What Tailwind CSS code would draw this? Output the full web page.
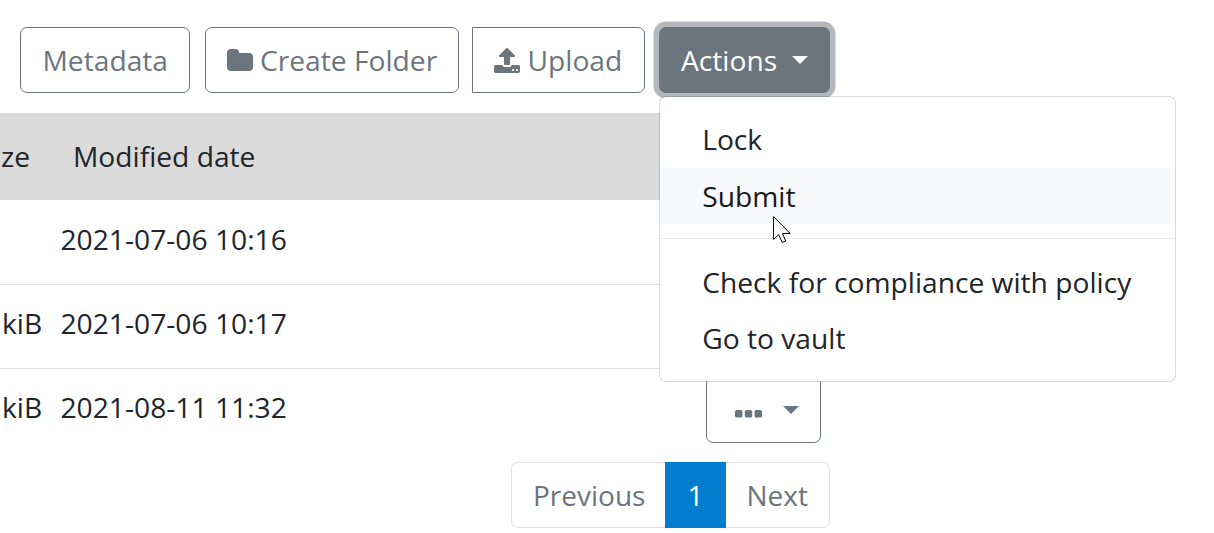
<!DOCTYPE html>
<html lang="en">
<head>
<meta charset="utf-8">
<title>Research files</title>
<script src="https://cdn.jsdelivr.net/npm/@tailwindcss/browser@4"></script>
</head>
<body class="bg-white">
<div class="relative h-[533px] w-[1214px] overflow-hidden bg-white font-['Open_Sans','Noto_Sans',sans-serif] text-[28.2px] leading-[42px] text-[#212529]">
  <div class="w-[830px]">
    <div class="flex h-[113px] pt-[27px] text-[#6c757d]">
      <button class="ml-5 flex h-[66px] w-[170px] items-center rounded-[7px] border border-[#6c757d] pl-[21.5px]"><span>Metadata</span></button>
      <button class="ml-[15px] flex h-[66px] w-[254px] items-center rounded-[7px] border border-[#6c757d] pl-[20px]">
        <svg class="mr-[6px] size-7 shrink-0 translate-y-px" viewBox="0 0 1792 1792" fill="currentColor"><path d="M1728 608v704q0 92-66 158t-158 66H288q-92 0-158-66t-66-158V352q0-92 66-158t158-66h320q92 0 158 66t66 158v32h672q92 0 158 66t66 158z"/></svg>
        <span class="whitespace-nowrap">Create Folder</span>
      </button>
      <button class="ml-[13px] flex h-[66px] w-[173px] items-center rounded-r-[7px] border border-[#6c757d] pl-[20px]">
        <svg class="mr-[6.5px] size-7 shrink-0 translate-y-px" viewBox="0 0 1792 1792" fill="currentColor"><path d="M1344 1472q0-26-19-45t-45-19-45 19-19 45 19 45 45 19 45-19 19-45zm256 0q0-26-19-45t-45-19-45 19-19 45 19 45 45 19 45-19 19-45zm128-224v320q0 40-28 68t-68 28H160q-40 0-68-28t-28-68v-320q0-40 28-68t68-28h427q21 56 70.5 92t110.5 36h256q61 0 110.5-36t70.5-92h427q40 0 68 28t28 68zm-325-648q-17 40-59 40h-256v448q0 26-19 45t-45 19H768q-26 0-45-19t-19-45V640H448q-42 0-59-40-17-39 14-69l448-448q18-19 45-19t45 19l448 448q31 30 14 69z"/></svg>
        <span>Upload</span>
      </button>
      <button class="ml-[14px] flex h-[66px] w-[171px] items-center rounded-[7px] bg-[#6c757d] pl-[22px] text-white ring-[5.5px] ring-[#b2b9be]">
        <span class="w-[96px]">Actions</span>
        <svg class="ml-[15px] h-[8px] w-[16px]" viewBox="0 0 16 8" fill="currentColor"><path d="M0 0h16L8 8z"/></svg>
      </button>
    </div>
    <div class="flex h-[87px] items-center bg-[#dbdbdb] pb-[2px]">
      <span class="w-[73px] pl-[1px]">ze</span><span>Modified date</span>
    </div>
    <div class="flex h-[85px] items-center border-b border-[#dee2e6] pb-[6px]">
      <span class="w-[60.5px]"></span><span>2021-07-06 10:16</span>
    </div>
    <div class="flex h-[84px] items-center border-b border-[#dee2e6] pb-[7px]">
      <span class="w-[60.5px] pl-[2px]">kiB</span><span>2021-07-06 10:17</span>
    </div>
    <div class="flex h-[84px] items-center pb-[8px]">
      <span class="w-[60.5px] pl-[2px]">kiB</span><span>2021-08-11 11:32</span>
      <button class="mt-[6px] mr-[9px] ml-auto flex h-[66px] w-[115px] items-center rounded-[7px] border border-[#6c757d] pt-px pl-[28px] text-[#6c757d]">
        <svg class="h-[8px] w-[27px] translate-y-[3px]" viewBox="0 0 27 8" fill="currentColor"><rect width="7.4" height="7.6" rx="1.6"/><rect x="9.8" width="7.4" height="7.6" rx="1.6"/><rect x="19.6" width="7.4" height="7.6" rx="1.6"/></svg>
        <svg class="ml-[21px] h-[8px] w-[16px] -translate-y-px" viewBox="0 0 16 8" fill="currentColor"><path d="M0 0h16L8 8z"/></svg>
      </button>
    </div>
    <div class="mt-[9px] ml-[511px] flex h-[66px] w-[319px] text-[28px] text-[#6c757d]">
      <span class="flex w-[154px] items-center rounded-l-[7px] border border-r-0 border-[#dee2e6] pl-[21px] pb-px">Previous</span>
      <span class="flex w-[61px] items-center justify-center bg-[#007dcd] pb-px text-white">1</span>
      <span class="flex w-[104px] items-center rounded-r-[7px] border border-l-0 border-[#dee2e6] pl-[20.5px] pb-px">Next</span>
    </div>
  </div>

  <div class="absolute top-[96px] left-[659px] h-[286px] w-[517px] rounded-[7px] border border-black/15 bg-white bg-clip-padding pt-[15px]">
    <div class="h-[56px] pt-[6px] pl-[42.2px]">Lock</div>
    <div class="h-[56px] bg-[#f8f9fa] pt-[7px] pl-[42.2px] text-[#16181b]">Submit</div>
    <div class="mt-[14px] mb-[15px] h-px bg-[#e9ecef]"></div>
    <div class="h-[56px] pt-[7px] pl-[42.2px] whitespace-nowrap">Check for compliance with policy</div>
    <div class="h-[56px] pt-[7px] pl-[42.2px]">Go to vault</div>
  </div>
  <svg class="absolute top-[215px] left-[772px] h-[30px] w-[20px]" viewBox="0 0 20 30" fill="white" stroke="black" stroke-width="1"><path d="M1.5 1.5V24.5L6.7 19.7L10.2 27.5L13.7 26L10.5 18.5H18.2Z"/></svg>
</div>
</body>
</html>
